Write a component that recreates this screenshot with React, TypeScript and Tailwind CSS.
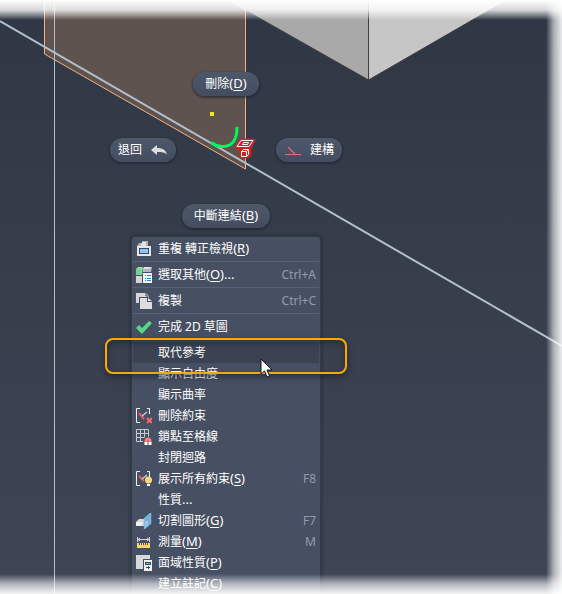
import type { ReactNode } from "react";

type MenuItem = {
  label: string;
  accessKey?: string;
  suffix?: string;
  shortcut?: string;
  icon?: ReactNode;
  separator?: boolean;
  active?: boolean;
};

function Icon({ children }: { children: ReactNode }) {
  return (
    <svg viewBox="0 0 16 16" className="h-4 w-4" aria-hidden="true">
      {children}
    </svg>
  );
}

const repeatIcon = (
  <Icon>
    <path d="M1 5L3 2h3V0h6v5z" fill="#aeb3ba" />
    <path d="M6 1h4v4H5z" fill="#e3e3e3" />
    <path d="M1 5h14v10H1z" fill="#e6e6e6" />
    <path d="M3 7h10v6H3z" fill="#3d4658" />
    <path d="M4 8h8v4H4z" fill="#8ac6ff" />
  </Icon>
);

const selectOtherIcon = (
  <Icon>
    <path d="M0 2l2-2h5L6 8H0z" fill="#86dda4" />
    <path d="M0 2h5v6H0z" fill="#72d295" />
    <path d="M7 2l2-2h7l-1 5H7z" fill="#b4b7bb" />
    <path d="M8 0h7l-2 2H7z" fill="#e0e0e0" />
    <path d="M0 9h6v7H0z" fill="#d5d5d5" />
    <path d="M7 6h9v10H7z" fill="#f5f5f5" />
    <path d="M9 8h1v1H9zM9 11h1v1H9zM9 13h1v1H9zM11 8h4v1h-4zM11 11h4v1h-4zM11 13h4v1h-4z" fill="#168bdd" />
  </Icon>
);

const copyIcon = (
  <Icon>
    <path d="M0 0h10l3 3v7H0z" fill="#d6d6d6" />
    <path d="M3 4h9l4 4v8H3z" fill="#475063" />
    <path d="M4 5h7v4h5v7H4z" fill="#dedede" />
    <path d="M12 5l4 3h-4z" fill="#e8e8e8" />
    <path d="M10 0v3h3" fill="none" stroke="#475063" />
  </Icon>
);

const checkIcon = (
  <Icon>
    <path d="M0 9l3-3 3 3 7-7 3 2L6 15z" fill="#58d886" />
  </Icon>
);

const bracketPath = "M4 .5H.5v14H4M11 .5h2.5V6";

const deleteConstraintIcon = (
  <Icon>
    <path d={bracketPath} fill="none" stroke="#f0f0f0" />
    <path d="M3 5l5 6" stroke="#e85f60" strokeWidth="2" />
    <path d="M6 8l5-4" stroke="#c8cbd0" strokeWidth="1.5" />
    <path d="M11 10l5 5M16 10l-5 5" stroke="#ff6666" strokeWidth="2" />
  </Icon>
);

const snapGridIcon = (
  <Icon>
    <path d="M.5.5h12v12H.5zM4.5 0v13M8.5 0v13M0 4.5h13M0 8.5h13" fill="none" stroke="#c5c9d0" />
    <path d="M7 16v-4a4 4 0 0 1 9 0v4z" fill="#475063" />
    <path d="M10 14v-2a2 2 0 0 1 4 0v2" fill="none" stroke="#ff7b7d" strokeWidth="3" />
    <path d="M8.5 13h3v3h-3zM12.5 13h3v3h-3z" fill="#fff" />
  </Icon>
);

const showConstraintIcon = (
  <Icon>
    <path d={bracketPath} fill="none" stroke="#f0f0f0" />
    <path d="M3 5l5 5" stroke="#e85f60" strokeWidth="2" />
    <path d="M6 8l5-4" stroke="#c8cbd0" strokeWidth="1.5" />
    <circle cx="12.5" cy="9" r="3.5" fill="#ffd57d" />
    <path d="M11 13h3v2h-3z" fill="#f5f5f5" />
  </Icon>
);

const sliceIcon = (
  <Icon>
    <path d="M0 9l3-3h6v7H0z" fill="#d7d7d7" />
    <path d="M0 9h6v4H0z" fill="#f0f0f0" />
    <path d="M8.5 5.5l6-5v10l-6 5z" fill="#8ea8c0" stroke="#67bdf7" strokeWidth="1.5" />
    <path d="M9 8h3v4l-3 2z" fill="#b5c0cb" />
  </Icon>
);

const measureIcon = (
  <Icon>
    <path d="M1.5 3v5M13.5 3v5M1 5.5h13M4 4L2 5.5 4 7M11 4l2 1.5L11 7" fill="none" stroke="#d0d3d8" />
    <path d="M1 9h13v5H1z" fill="#ffd36e" />
    <path d="M3.5 9v2M5.5 9v2M7.5 9v2M9.5 9v2M11.5 9v2" stroke="#5a5548" />
  </Icon>
);

const regionIcon = (
  <Icon>
    <path d="M0 0h14v14H0z" fill="#d8d8d8" />
    <path d="M7 4h9v12H7z" fill="#475063" />
    <path d="M8 5h8v11H8z" fill="#f2f2f2" />
    <path d="M9 7h6v3H9z" fill="#3b4658" />
    <path d="M10 8h4v1h-4z" fill="#58b9fa" />
    <path d="M12 11h1v1h1v1h-1v1h-1v-1h-2v-1h2z" fill="#3b4658" />
  </Icon>
);

const items: MenuItem[] = [
  { label: "重複 轉正檢視", accessKey: "R", icon: repeatIcon, separator: true },
  { label: "選取其他", accessKey: "O", suffix: "...", shortcut: "Ctrl+A", icon: selectOtherIcon, separator: true },
  { label: "複製", shortcut: "Ctrl+C", icon: copyIcon, separator: true },
  { label: "完成 2D 草圖", icon: checkIcon, separator: true },
  { label: "取代參考", active: true },
  { label: "顯示自由度" },
  { label: "顯示曲率" },
  { label: "刪除約束", icon: deleteConstraintIcon },
  { label: "鎖點至格線", icon: snapGridIcon },
  { label: "封閉迴路" },
  { label: "展示所有約束", accessKey: "S", shortcut: "F8", icon: showConstraintIcon },
  { label: "性質", suffix: "..." },
  { label: "切割圖形", accessKey: "G", shortcut: "F7", icon: sliceIcon },
  { label: "測量", accessKey: "M", shortcut: "M", icon: measureIcon },
  { label: "面域性質", accessKey: "P", icon: regionIcon },
  { label: "建立註記", accessKey: "C" },
];

function Label({ text, accessKey, suffix }: { text: string; accessKey?: string; suffix?: string }) {
  return (
    <span className="whitespace-nowrap">
      {text}
      <span className="text-[13px] leading-none">
        {accessKey ? (
          <>
            (<span className="underline underline-offset-2">{accessKey}</span>)
          </>
        ) : null}
        {suffix}
      </span>
    </span>
  );
}

function Pill({ children }: { children: ReactNode }) {
  return (
    <button
      type="button"
      className="flex h-6 items-center gap-2 rounded-full bg-linear-to-b from-[#4e586b] to-[#444d60] px-2 text-xs text-white shadow-[0_1px_2px_1px_rgba(28,34,44,0.6)]"
    >
      {children}
    </button>
  );
}

function MenuRow({ item }: { item: MenuItem }) {
  return (
    <li role="none" className="relative">
      <button
        type="button"
        role="menuitem"
        className={`flex h-[21px] w-full items-center px-[3px] text-left text-xs text-white ${item.active ? "bg-[#3b4353]" : ""}`}
      >
        <span className="mr-1.5 h-4 w-4 shrink-0">{item.icon}</span>
        <Label text={item.label} accessKey={item.accessKey} suffix={item.suffix} />
        {item.shortcut ? <span className="ml-auto text-[#949ba8]">{item.shortcut}</span> : null}
      </button>
      {item.separator ? <div role="separator" className="my-0.5 h-px bg-[#586275]" /> : null}
      {item.active ? (
        <>
          <div className="pointer-events-none absolute -inset-x-7 -top-1 z-10 h-9 rounded-lg border-2 border-[#f7aa05] shadow-[0_3px_6px_rgba(20,24,32,0.55),inset_0_3px_6px_rgba(20,24,32,0.45)]" />
          <svg viewBox="0 0 14 20" className="pointer-events-none absolute top-4 left-[127px] z-20 h-5 w-3.5" aria-hidden="true">
            <path d="M1 1v15l3.5-3 2.5 6 2.5-1-2.5-6H12z" fill="#fff" stroke="#12141c" />
          </svg>
        </>
      ) : null}
    </li>
  );
}

function Scene() {
  return (
    <svg className="absolute inset-0 h-full w-full" viewBox="0 0 562 594" preserveAspectRatio="xMidYMin slice" aria-hidden="true">
      <path d="M44.5 0v54l201 115V10L228 0z" fill="#5e534f" />
      <path d="M44.5 0v54l201 115V10L228 0" fill="none" stroke="#f5b183" />
      <path d="M227 0l141.5 80V0z" fill="#a9a9a9" />
      <path d="M368.5 80L507 0H368.5z" fill="#c6c6c6" />
      <path d="M246 10.5L368.5 80 507 0M368.5 0v80" fill="none" stroke="#3f3f3f" />
      <path d="M54.5 0v594" stroke="#b4bfcc" />
      <path d="M0 21l562 325" stroke="#b4bfcc" strokeWidth="2" />
      <path d="M210 112h4v4h-4z" fill="#eeea00" />
      <path d="M212 143c4 3 7 4 12 3.5 8-.5 13-7 13-18.5" fill="none" stroke="#00f95d" strokeWidth="3" strokeLinecap="round" />
      <g strokeLinejoin="round">
        <path d="M241.5 140.5h12l-4 7v7l-2 2h-6v-6l1-2h-5.5z" fill="#cf2025" stroke="#cf2025" strokeWidth="4" />
        <path d="M241 140.5h12l-4 6h-12zM243.5 142.5h5l-1 2h-5z" fill="none" stroke="#fff" />
        <path d="M241.5 151.5h5v5h-5zM241.5 151.5l2-2h5l-2 2M248.5 149.5v5l-2 2" fill="none" stroke="#fff" />
      </g>
    </svg>
  );
}

export default function App() {
  return (
    <main
      lang="zh-Hant"
      className="relative h-screen overflow-hidden bg-linear-to-b from-[#303744] to-[#3e4554] font-['Noto_Sans','Noto_Sans_CJK_TC',sans-serif]"
    >
      <Scene />

      <div className="absolute top-[72px] left-1/2 -ml-[171px] flex w-[232px] flex-col items-center">
        <Pill>
          <span className="px-1">
            <Label text="刪除" accessKey="D" />
          </span>
        </Pill>
        <div className="mt-[42px] flex w-full justify-between">
          <Pill>
            退回
            <svg viewBox="0 0 18 12" className="h-3 w-[18px]" aria-hidden="true">
              <path d="M1 6l6-5v3c6 0 9 2 10 7-2-3-5-3-10-3v3z" fill="#deded9" />
            </svg>
          </Pill>
          <Pill>
            <svg viewBox="0 0 18 12" className="h-3 w-[18px]" aria-hidden="true">
              <path d="M1 10.5h16M4 3l7 7" fill="none" stroke="#ee686b" strokeWidth="1.2" />
            </svg>
            建構
          </Pill>
        </div>
        <div className="mt-[42px]">
          <Pill>
            <span className="px-1">
              <Label text="中斷連結" accessKey="B" />
            </span>
          </Pill>
        </div>

        <ul role="menu" className="mt-2 w-[190px] rounded-sm border border-[#343b49] bg-[#475063] p-px shadow-[0_0_3px_1px_rgba(28,34,44,0.5)]">
          {items.map((item) => (
            <MenuRow key={item.label} item={item} />
          ))}
        </ul>
      </div>

      {/* soft white edges of the viewport */}
      <div className="pointer-events-none absolute inset-x-0 top-0 z-30 h-5 bg-linear-to-b from-white via-white/80 to-transparent" />
      <div className="pointer-events-none absolute inset-x-0 bottom-0 z-30 h-5 bg-linear-to-t from-white/95 via-white/60 to-transparent" />
      <div className="pointer-events-none absolute inset-y-0 right-0 z-30 w-4 bg-linear-to-l from-white/90 via-white/60 to-transparent" />
    </main>
  );
}
